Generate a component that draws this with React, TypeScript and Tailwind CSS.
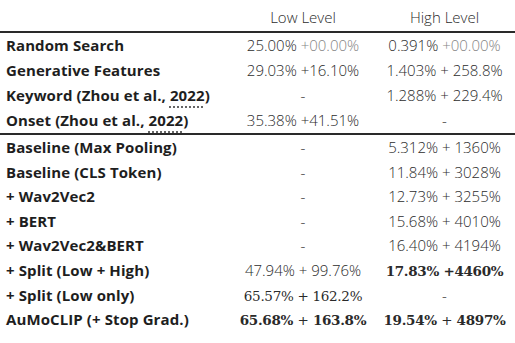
import React from 'react';

type Cell = React.ReactNode;

const sans = "font-['Open_Sans','Noto_Sans',sans-serif]";
const serif = "font-['DejaVu_Serif','Liberation_Serif',serif]";

function Num({ a, b, dim }: { a: string; b: string; dim?: boolean }) {
  return (
    <span className={`${sans} font-light text-[#2c2c2c]`}>
      {a} <span className={dim ? 'text-[#858585]' : ''}>{b}</span>
    </span>
  );
}

function SerifNum({ a, b, bold }: { a: string; b: string; bold?: boolean }) {
  return (
    <span className={`${serif} text-[#2a2a2a] text-[13.5px] tracking-[-0.3px] ${bold ? 'font-bold' : ''}`}>
      {a} <span className="font-normal">+</span> {b}
    </span>
  );
}

const Dash = () => <span className={`${sans} font-light text-[#2c2c2c]`}>-</span>;

const Cite = ({ name }: { name: string }) => (
  <>
    {name} (Zhou et al.,{' '}
    <span className="underline decoration-dotted decoration-[#333] underline-offset-[5px]">2022</span>)
  </>
);

const topRows: [Cell, Cell, Cell][] = [
  ['Random Search', <Num a="25.00%" b="+00.00%" dim />, <Num a="0.391%" b="+00.00%" dim />],
  ['Generative Features', <Num a="29.03%" b="+16.10%" />, <Num a="1.403%" b="+ 258.8%" />],
  [<Cite name="Keyword" />, <Dash />, <Num a="1.288%" b="+ 229.4%" />],
  [<Cite name="Onset" />, <Num a="35.38%" b="+41.51%" />, <Dash />],
];

const bottomRows: [Cell, Cell, Cell][] = [
  ['Baseline (Max Pooling)', <Dash />, <Num a="5.312%" b="+ 1360%" />],
  ['Baseline (CLS Token)', <Dash />, <Num a="11.84%" b="+ 3028%" />],
  ['+ Wav2Vec2', <Dash />, <Num a="12.73%" b="+ 3255%" />],
  ['+ BERT', <Dash />, <Num a="15.68%" b="+ 4010%" />],
  ['+ Wav2Vec2&BERT', <Dash />, <Num a="16.40%" b="+ 4194%" />],
  [
    '+ Split (Low + High)',
    <Num a="47.94%" b="+ 99.76%" />,
    <span className={`${serif} text-[#2a2a2a] text-[13.5px] tracking-[-0.3px] font-bold`}>17.83% +4460%</span>,
  ],
  ['+ Split (Low only)', <SerifNum a="65.57%" b="162.2%" />, <Dash />],
  ['AuMoCLIP (+ Stop Grad.)', <SerifNum a="65.68%" b="163.8%" bold />, <SerifNum a="19.54%" b="4897%" bold />],
];

function Row({ cells, h }: { cells: [Cell, Cell, Cell]; h: string }) {
  return (
    <div className={`grid grid-cols-[232px_142px_141px] items-center ${h} text-[15px] whitespace-nowrap`}>
      <div className={`pl-[6px] ${sans} font-bold text-[#1e1e1e] tracking-[0.1px]`}>{cells[0]}</div>
      <div className="text-center">{cells[1]}</div>
      <div className="text-center">{cells[2]}</div>
    </div>
  );
}

export default function App() {
  return (
    <div className="w-[515px] h-[343px] bg-white overflow-hidden">
      <div className={`grid grid-cols-[232px_142px_141px] h-[31px] items-center pt-[4px] text-[15px] ${sans} font-light text-[#2c2c2c]`}>
        <div />
        <div className="text-center">Low Level</div>
        <div className="text-center">High Level</div>
      </div>
      <div className="h-[2px] bg-[#2a2a2a]" />
      {topRows.map((r, i) => (
        <Row key={i} cells={r} h="h-[25px]" />
      ))}
      <div className="h-[2px] bg-[#2a2a2a]" />
      {bottomRows.map((r, i) => (
        <Row key={i} cells={r} h="h-[24.6px]" />
      ))}
    </div>
  );
}
